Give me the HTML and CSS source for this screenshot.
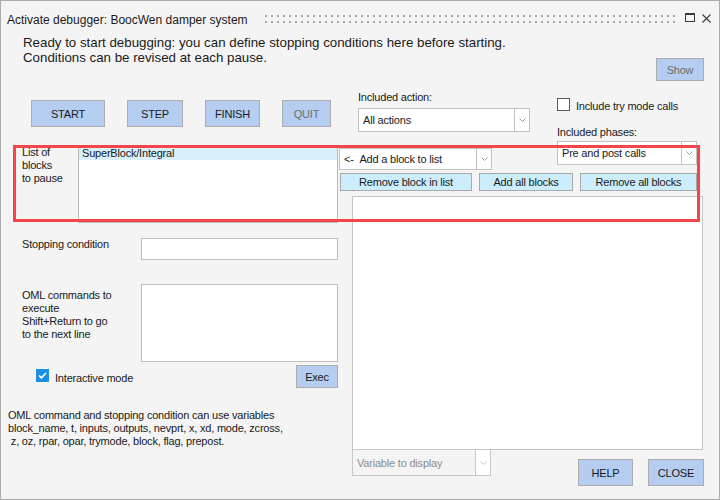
FILE: index.html
```html
<!DOCTYPE html>
<html>
<head>
<meta charset="utf-8">
<title>Activate debugger</title>
<link rel="stylesheet" href="styles.css">
</head>
<body>
<div class="window">
  <div class="titlebar">
    <span class="title">Activate debugger: BoocWen damper system</span>
    <svg class="grip"><defs><pattern id="dots" width="6" height="6" patternUnits="userSpaceOnUse"><rect width="2" height="2" fill="#a6a6a6"/></pattern></defs><rect width="100%" height="100%" fill="url(#dots)"/></svg>
    <svg class="ico-max" width="10" height="9" viewBox="0 0 10 9"><rect x="0.5" y="0.5" width="9" height="8" fill="none" stroke="#3a3a3a"/><rect x="0" y="0" width="10" height="2" fill="#3a3a3a"/></svg>
    <svg class="ico-close" width="9" height="9" viewBox="0 0 9 9"><path d="M0.5 0.5L8.5 8.5M8.5 0.5L0.5 8.5" stroke="#3a3a3a" stroke-width="1.1" fill="none"/></svg>
  </div>

  <div class="intro">
    <p class="intro-text">Ready to start debugging: you can define stopping conditions here before starting.<br>Conditions can be revised at each pause.</p>
    <button class="btn btn-blue btn-off btn-show">Show</button>
  </div>

  <div class="main">
    <div class="left">
      <div class="run-buttons">
        <button class="btn btn-blue w-start">START</button>
        <button class="btn btn-blue w-step">STEP</button>
        <button class="btn btn-blue w-finish">FINISH</button>
        <button class="btn btn-blue btn-off w-quit">QUIT</button>
      </div>

      <div class="blocks">
        <div class="lbl blocks-lbl">List of<br>blocks<br>to pause</div>
        <div class="listbox">
          <div class="list-item selected">SuperBlock/Integral</div>
        </div>
      </div>

      <div class="stop-row">
        <div class="lbl field-lbl">Stopping condition</div>
        <div class="input stop-input"></div>
      </div>

      <div class="oml-row">
        <div class="lbl field-lbl oml-lbl">OML commands to<br>execute<br>Shift+Return to go<br>to the next line</div>
        <div class="input oml-input"></div>
      </div>

      <div class="interactive-row">
        <span class="check checked"><svg width="9" height="7" viewBox="0 0 9 7"><path d="M1 3.5L3.4 5.8L8 1" stroke="#fff" stroke-width="1.6" fill="none"/></svg></span>
        <span class="lbl interactive-lbl">Interactive mode</span>
        <button class="btn btn-blue btn-exec">Exec</button>
      </div>

      <div class="lbl notes">OML command and stopping condition can use variables<br>block_name, t, inputs, outputs, nevprt, x, xd, mode, zcross,<br>&nbsp;z, oz, rpar, opar, trymode, block, flag, prepost.</div>
    </div>

    <div class="right">
      <div class="right-top">
        <div class="col-action">
          <div class="lbl action-lbl">Included action:</div>
          <div class="combo combo-action">
            <div class="combo-field">All actions</div>
            <div class="combo-arrow"><svg width="7" height="4" viewBox="0 0 7 4"><path d="M0.5 0.5L3.5 3.5L6.5 0.5" stroke="#9a9a9a" fill="none"/></svg></div>
          </div>
          <div class="combo combo-add">
            <div class="combo-field">&lt;- &nbsp;Add a block to list</div>
            <div class="combo-arrow"><svg width="7" height="4" viewBox="0 0 7 4"><path d="M0.5 0.5L3.5 3.5L6.5 0.5" stroke="#9a9a9a" fill="none"/></svg></div>
          </div>
        </div>
        <div class="col-phases">
          <div class="try-row">
            <span class="check"></span>
            <span class="lbl try-lbl">Include try mode calls</span>
          </div>
          <div class="lbl phases-lbl">Included phases:</div>
          <div class="combo combo-phases">
            <div class="combo-field">Pre and post calls</div>
            <div class="combo-arrow"><svg width="7" height="4" viewBox="0 0 7 4"><path d="M0.5 0.5L3.5 3.5L6.5 0.5" stroke="#9a9a9a" fill="none"/></svg></div>
          </div>
        </div>
      </div>

      <div class="list-buttons">
        <button class="btn btn-cyan w-remove">Remove block in list</button>
        <button class="btn btn-cyan w-addall">Add all blocks</button>
        <button class="btn btn-cyan w-removeall">Remove all blocks</button>
      </div>

      <div class="output"></div>

      <div class="bottom-row">
        <div class="combo combo-var disabled">
          <div class="combo-field">Variable to display</div>
          <div class="combo-arrow"><svg width="7" height="4" viewBox="0 0 7 4"><path d="M0.5 0.5L3.5 3.5L6.5 0.5" stroke="#c4c4c4" fill="none"/></svg></div>
        </div>
        <button class="btn btn-blue btn-help">HELP</button>
        <button class="btn btn-blue btn-close">CLOSE</button>
      </div>
    </div>
  </div>

  <div class="highlight"></div>
</div>
</body>
</html>
```

FILE: styles.css
```css
* { box-sizing: border-box; }

html, body {
  margin: 0;
  padding: 0;
  background: #f4f4f4;
}

body {
  font-family: "Liberation Sans", Arial, sans-serif;
  color: #1a1a1a;
}

.window {
  position: relative;
  width: 720px;
  height: 500px;
  border: 1px solid #ababab;
  background: #f4f4f4;
  display: flex;
  flex-direction: column;
  overflow: hidden;
}

/* ---------- generic ---------- */
.lbl {
  font-size: 11px;
  letter-spacing: -0.2px;
  line-height: 13px;
  white-space: nowrap;
}
.btn {
  font-family: inherit;
  font-size: 11px;
  letter-spacing: -0.2px;
  color: #1a1a1a;
  border: 1px solid #adadad;
  padding: 0;
  margin: 0;
  flex: none;
}
.btn-blue { background: #b4cdf0; }
.btn-cyan { background: #ccedfb; border-color: #a9a9a9; }
.btn-off { color: #6e6e6e; }

.input {
  background: #fff;
  border: 1px solid #bdbdbd;
}

.check {
  flex: none;
  width: 13px;
  height: 13px;
  background: #fff;
  border: 1px solid #5a5a5a;
  display: flex;
  align-items: center;
  justify-content: center;
}
.check.checked {
  background: #1e90e4;
  border-color: #1e90e4;
}

.combo {
  display: flex;
  flex: none;
}
.combo-field {
  flex: 1;
  background: #fff;
  border: 1px solid #c2c2c2;
  font-size: 11px;
  letter-spacing: -0.2px;
  padding-left: 4px;
  display: flex;
  align-items: center;
  white-space: nowrap;
  overflow: hidden;
}
.combo-arrow {
  width: 15px;
  flex: none;
  background: #fff;
  border: 1px solid #c2c2c2;
  border-left: none;
  display: flex;
  align-items: center;
  justify-content: center;
}
.combo.disabled .combo-field {
  background: #f4f4f4;
  color: #8c8c8c;
  border-color: #c8c8c8;
}
.combo.disabled .combo-arrow { border-color: #c8c8c8; }

/* ---------- title bar ---------- */
.titlebar {
  height: 34px;
  flex: none;
  display: flex;
  align-items: flex-start;
  padding: 12px 8px 0 6px;
}
.title {
  font-size: 12px;
  line-height: 14px;
  white-space: nowrap;
  color: #1a1a1a;
}
.grip {
  flex: 1;
  height: 8px;
  margin: 2px 9px 0 17px;
}
.ico-max { margin-top: 0; }
.ico-close { margin: 1px 0 0 7px; }

/* ---------- intro ---------- */
.intro {
  height: 46px;
  flex: none;
  display: flex;
  align-items: flex-start;
}
.intro-text {
  margin: 0;
  padding-left: 22px;
  font-size: 13.3px;
  line-height: 15px;
  white-space: nowrap;
}
.intro .btn-show {
  align-self: flex-end;
  margin: 0 15px 0 auto;
  width: 48px;
  height: 23px;
}

/* ---------- main ---------- */
.main {
  flex: 1;
  display: flex;
}
.left {
  width: 337px;
  flex: none;
  display: flex;
  flex-direction: column;
}
.right {
  flex: 1;
  display: flex;
  flex-direction: column;
}

/* left column */
.run-buttons {
  display: flex;
  gap: 22px;
  margin-top: 19px;
  padding-left: 30px;
  height: 27px;
}
.run-buttons .btn { height: 27px; }
.w-start { width: 74px; }
.w-step { width: 56px; }
.w-finish { width: 55px; }
.w-quit { width: 49px; }

.blocks {
  display: flex;
  margin-top: 19px;
  height: 77px;
}
.blocks-lbl {
  width: 77px;
  padding-left: 21px;
}
.listbox {
  width: 260px;
  background: #fff;
  border: 1px solid #b9b9b9;
}
.list-item {
  font-size: 11px;
  letter-spacing: -0.2px;
  line-height: 13px;
  height: 13px;
  padding-left: 3px;
}
.list-item.selected { background: #d9effa; }

.stop-row {
  display: flex;
  margin-top: 15px;
}
.field-lbl {
  width: 140px;
  padding-left: 21px;
}
.stop-input {
  width: 197px;
  height: 22px;
}

.oml-row {
  display: flex;
  margin-top: 24px;
}
.oml-lbl { padding-top: 5px; }
.oml-input {
  width: 197px;
  height: 78px;
}

.interactive-row {
  display: flex;
  align-items: flex-start;
  margin-top: 3px;
  height: 23px;
}
.interactive-row .check {
  margin: 4px 0 0 35px;
}
.interactive-lbl { margin: 7px 0 0 6px; }
.interactive-row .btn-exec {
  margin-left: auto;
  width: 42px;
  height: 23px;
}

.notes {
  margin-top: 21px;
  padding-left: 7px;
}

/* right column */
.right-top {
  display: flex;
  padding-top: 9px;
  height: 89px;
}
.col-action {
  width: 219px;
  flex: none;
  display: flex;
  flex-direction: column;
}
.action-lbl {
  margin-left: 20px;
  line-height: 14px;
}
.combo-action {
  margin: 4px 0 0 20px;
  width: 172px;
  height: 24px;
}
.combo-add {
  margin: 16px 0 0 1px;
  width: 153px;
  height: 22px;
}
.col-phases {
  flex: 1;
  display: flex;
  flex-direction: column;
}
.try-row {
  display: flex;
  align-items: flex-start;
  margin-top: 8px;
  height: 13px;
}
.try-lbl { margin: 2px 0 0 6px; }
.phases-lbl { margin-top: 15px; }
.combo-phases {
  margin-top: 2px;
  width: 140px;
  height: 24px;
}

.list-buttons {
  display: flex;
  gap: 7px;
  margin: 3px 0 0 2px;
  height: 18px;
}
.list-buttons .btn { height: 18px; }
.w-remove { width: 132px; }
.w-addall { width: 94px; }
.w-removeall { width: 117px; }

.output {
  margin: 5px 0 0 14px;
  width: 351px;
  height: 254px;
  background: #fff;
  border: 1px solid #c4c4c4;
}

.bottom-row {
  display: flex;
  align-items: flex-start;
  margin-top: -1px;
}
.combo-var {
  margin-left: 14px;
  width: 139px;
  height: 27px;
}
.bottom-row .btn-help {
  margin: 10px 0 0 87px;
  width: 55px;
  height: 27px;
}
.bottom-row .btn-close {
  margin: 10px 0 0 15px;
  width: 56px;
  height: 27px;
}

/* annotation overlay */
.highlight {
  position: absolute;
  left: 12px;
  top: 144px;
  width: 687px;
  height: 77px;
  border: 3px solid #f2464b;
  pointer-events: none;
}
```
